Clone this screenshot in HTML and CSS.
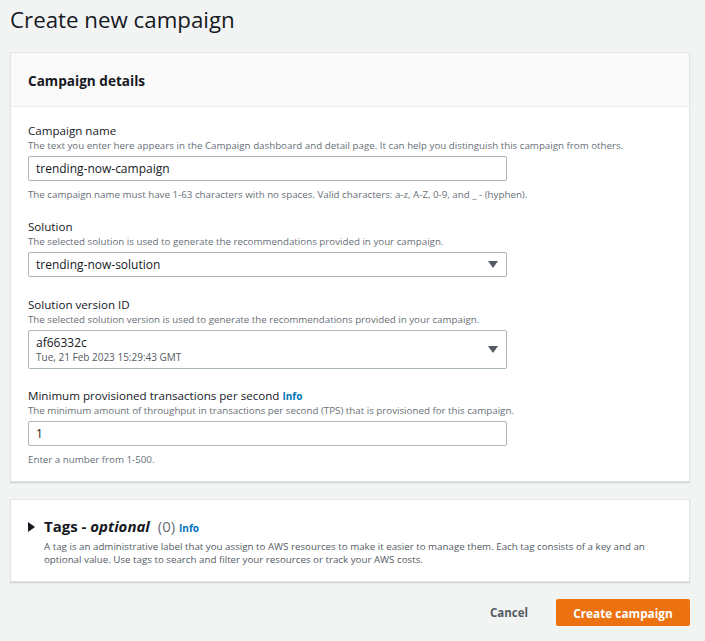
FILE: index.html
```html
<!DOCTYPE html>
<html>
<head>
<meta charset="utf-8">
<link rel="stylesheet" href="styles.css">
</head>
<body>
<div class="page">
  <h1 class="title">Create new campaign</h1>
  <section class="card">
    <header class="card-header"><h2>Campaign details</h2></header>
    <div class="card-body">
      <div class="field with-hint">
        <div class="label">Campaign name</div>
        <div class="desc">The text you enter here appears in the Campaign dashboard and detail page. It can help you distinguish this campaign from others.</div>
        <div class="input">trending-now-campaign</div>
        <div class="hint">The campaign name must have 1-63 characters with no spaces. Valid characters: a-z, A-Z, 0-9, and _ - (hyphen).</div>
      </div>
      <div class="field">
        <div class="label">Solution</div>
        <div class="desc">The selected solution is used to generate the recommendations provided in your campaign.</div>
        <div class="input select"><span>trending-now-solution</span><span class="caret"></span></div>
      </div>
      <div class="field tall-field">
        <div class="label">Solution version ID</div>
        <div class="desc">The selected solution version is used to generate the recommendations provided in your campaign.</div>
        <div class="input select tall"><span class="two"><span>af66332c</span><span class="sub">Tue, 21 Feb 2023 15:29:43 GMT</span></span><span class="caret"></span></div>
      </div>
      <div class="field with-hint">
        <div class="label">Minimum provisioned transactions per second <a class="info">Info</a></div>
        <div class="desc">The minimum amount of throughput in transactions per second (TPS) that is provisioned for this campaign.</div>
        <div class="input">1</div>
        <div class="hint">Enter a number from 1-500.</div>
      </div>
    </div>
  </section>
  <section class="card tags">
    <span class="expand"></span>
    <div class="tags-text">
      <h2 class="tags-title">Tags - <em>optional</em> <span class="count">(0)</span> <a class="info">Info</a></h2>
      <p class="tags-desc">A tag is an administrative label that you assign to AWS resources to make it easier to manage them. Each tag consists of a key and an optional value. Use tags to search and filter your resources or track your AWS costs.</p>
    </div>
  </section>
  <div class="actions">
    <button class="btn-link">Cancel</button>
    <button class="btn-primary">Create campaign</button>
  </div>
</div>
</body>
</html>
```
FILE: styles.css
```css
html, body {
  margin: 0;
  background: #f2f3f3;
  font-family: "Open Sans", "Liberation Sans", sans-serif;
  color: #16191f;
}
.page {
  padding: 0 15px 0 10px;
}
.title {
  margin: 0;
  padding-top: 4px;
  height: 48px;
  font-size: 22.3px;
  font-weight: 400;
  line-height: 32px;
}
.card {
  background: #fff;
  border: 1px solid #e3e6e6;
  box-shadow: 0 1px 1px rgba(0,28,36,0.15);
}
.card-header {
  background: #fafafa;
  border-bottom: 1px solid #eaeded;
  height: 54px;
  display: flex;
  align-items: center;
  padding-left: 17px;
  padding-top: 2px;
  box-sizing: border-box;
}
.card-header h2 {
  margin: 0;
  font-size: 13.6px;
  font-weight: 700;
}
.card-body {
  padding: 16px 17px 14px;
}
.field {
  margin-bottom: 20px;
}
.field.with-hint { margin-bottom: 17px; }
.field.tall-field { margin-bottom: 19px; }
.field:last-child { margin-bottom: 0; }
.label {
  font-size: 11.6px;
  line-height: 16px;
}
.desc, .hint {
  font-size: 9.75px;
  line-height: 14px;
  color: #687078;
}
.desc { margin-bottom: 3px; }
.hint { margin-top: 7px; }
.input {
  width: 479px;
  height: 25px;
  box-sizing: border-box;
  border: 1px solid #aab7b8;
  border-radius: 2px;
  padding: 0 7px;
  display: flex;
  align-items: center;
  font-size: 12px;
  background: #fff;
}
.select { justify-content: space-between; }
.tall { height: 39px; }
.two { display: flex; flex-direction: column; line-height: 15px; }
.sub { font-size: 10px; color: #545b64; }
.caret {
  width: 0; height: 0;
  border-left: 5px solid transparent;
  border-right: 5px solid transparent;
  border-top: 7px solid #545b64;
  margin-right: 1px;
}
.info {
  color: #0073bb;
  font-weight: 700;
  font-size: 10px;
}
.tags {
  margin-top: 17px;
  display: flex;
  padding: 16px 17px 15px 17px;
  height: 50px;
}
.expand {
  width: 0; height: 0;
  border-top: 5px solid transparent;
  border-bottom: 5px solid transparent;
  border-left: 7px solid #16191f;
  margin: 6px 9px 0 0;
}
.tags-title {
  margin: 0;
  font-size: 15px;
  font-weight: 700;
  line-height: 20px;
}
.tags-title em { font-style: italic; }
.count { font-weight: 400; color: #687078; margin-left: 4px; }
.tags-desc {
  margin: 2px 0 0;
  font-size: 9.75px;
  line-height: 13px;
  color: #545b64;
}
.actions {
  display: flex;
  justify-content: flex-end;
  align-items: center;
  margin-top: 17px;
}
.btn-link {
  background: none;
  border: none;
  font-family: inherit;
  font-size: 11.5px;
  font-weight: 700;
  color: #545b64;
  margin-right: 22px;
}
.btn-primary {
  background: #ec7211;
  border: none;
  border-radius: 2px;
  color: #fff;
  font-family: inherit;
  font-size: 11.8px;
  font-weight: 700;
  width: 134px;
  height: 27px;
}
```
